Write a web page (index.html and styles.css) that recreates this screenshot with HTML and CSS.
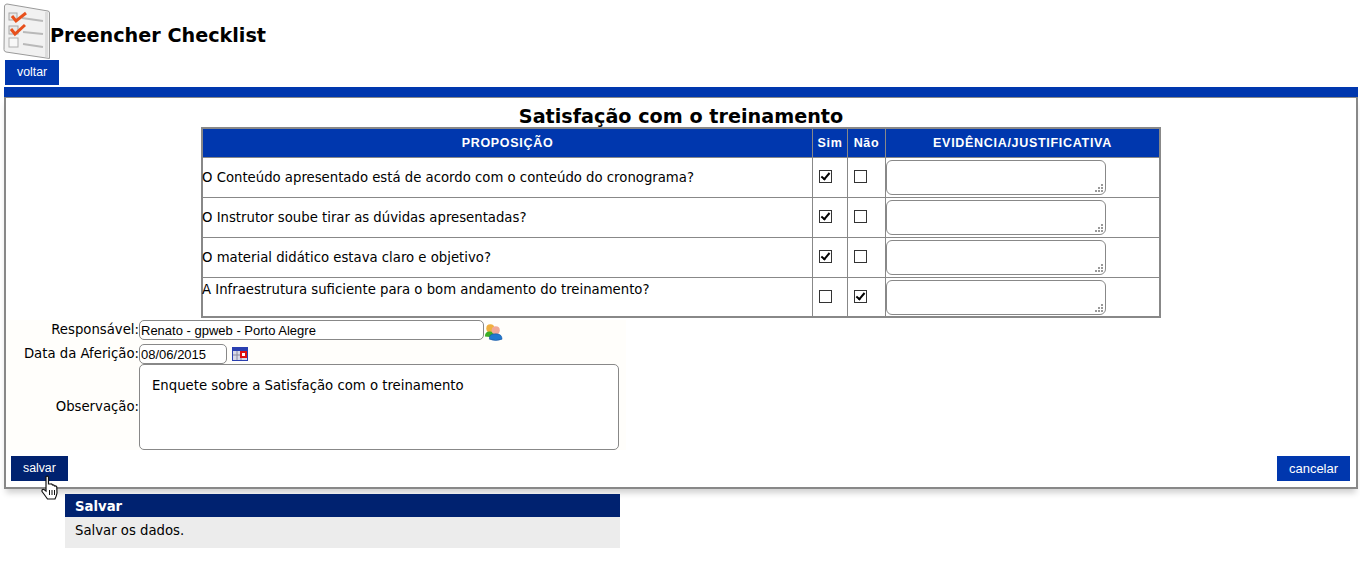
FILE: index.html
```html
<!DOCTYPE html>
<html lang="pt-BR">
<head>
    <meta charset="UTF-8">
    <title>Preencher Checklist</title>
    <link rel="stylesheet" href="styles.css">
</head>
<body>
    <div class="page-title">
        <svg class="title-icon" width="48" height="56" viewBox="0 0 48 56">
            <path d="M4 1 L45 8 Q46.500 8.300 46.500 10 L46.500 55.500 L3 49 Q1 48.500 1 46.500 L1.500 3 Q2 1 4 1 Z" fill="#f1f1f1" stroke="#9a9a9a"/>
            <path d="M45 9 L45 54.500 L42 54 L42 9 Z" fill="#dcdcdc"/>
            <rect x="6" y="10" width="8" height="7" fill="#e8e8e8" stroke="#a8a8a8"/>
            <rect x="6" y="23" width="9" height="8" fill="#e8e8e8" stroke="#a8a8a8"/>
            <rect x="6" y="35" width="9" height="9" fill="#f8f8f8" stroke="#b0b0b0"/>
            <path d="M19 15 L40 18 M20 29 L40 31 M20 41 L40 44" stroke="#b9b9b9" stroke-width="2" fill="none"/>
            <path d="M9 13 L13 18 L23 10" stroke="#e8501c" stroke-width="3" fill="none"/>
            <path d="M8 26 L12 31 L22 22" stroke="#e8501c" stroke-width="3" fill="none"/>
        </svg>
        <h1>Preencher Checklist</h1>
    </div>
    <div class="top-nav"><a class="btn">voltar</a></div>

    <div class="blue-bar"></div>
    <div class="box">
        <h2>Satisfação com o treinamento</h2>
        <table class="checklist">
            <thead>
                <tr>
                    <th class="col-text">PROPOSIÇÃO</th>
                    <th class="col-sim">Sim</th>
                    <th class="col-nao">Não</th>
                    <th>EVIDÊNCIA/JUSTIFICATIVA</th>
                </tr>
            </thead>
            <tbody>
                <tr>
                    <td>O Conteúdo apresentado está de acordo com o conteúdo do cronograma?</td>
                    <td class="mark"><input type="checkbox" checked></td>
                    <td class="mark"><input type="checkbox"></td>
                    <td class="evid"><textarea></textarea></td>
                </tr>
                <tr>
                    <td>O Instrutor soube tirar as dúvidas apresentadas?</td>
                    <td class="mark"><input type="checkbox" checked></td>
                    <td class="mark"><input type="checkbox"></td>
                    <td class="evid"><textarea></textarea></td>
                </tr>
                <tr>
                    <td>O material didático estava claro e objetivo?</td>
                    <td class="mark"><input type="checkbox" checked></td>
                    <td class="mark"><input type="checkbox"></td>
                    <td class="evid"><textarea></textarea></td>
                </tr>
                <tr class="last">
                    <td class="top">A Infraestrutura suficiente para o bom andamento do treinamento?</td>
                    <td class="mark"><input type="checkbox"></td>
                    <td class="mark"><input type="checkbox" checked></td>
                    <td class="evid"><textarea></textarea></td>
                </tr>
            </tbody>
        </table>

        <div class="form">
            <label>Responsável:</label>
            <div class="field">
                <input class="text wide" type="text" value="Renato - gpweb - Porto Alegre">
                <svg class="people" width="19" height="18" viewBox="0 0 21 20">
                    <circle cx="7" cy="6" r="4.500" fill="#f0b040"/>
                    <path d="M1 15 Q1 9 7 9.500 Q12 10 12 16 Z" fill="#3cae28"/>
                    <circle cx="13" cy="8" r="4.500" fill="#f0a898"/>
                    <path d="M6 18 Q5 12 13 12 Q20 12 20 18 Q13 21 6 18 Z" fill="#1f78d0" stroke="#14509a" stroke-width="0.600"/>
                </svg>
            </div>
            <label>Data da Aferição:</label>
            <div class="field">
                <input class="text date" type="text" value="08/06/2015">
                <svg class="cal" width="16" height="14" viewBox="0 0 16 14">
                    <rect x="0.500" y="0.500" width="15" height="13" fill="#d8d8e8" stroke="#2a3fb0"/>
                    <rect x="1" y="1" width="14" height="3" fill="#2a3fb0"/>
                    <path d="M5 4 V13 M9 4 V13 M1 8 H15" stroke="#8a8aa0"/>
                    <rect x="9" y="5" width="5" height="5" fill="#fff" stroke="#e01010" stroke-width="2"/>
                </svg>
            </div>
            <label class="obs-label">Observação:</label>
            <div class="field">
                <textarea class="obs">Enquete sobre a Satisfação com o treinamento</textarea>
            </div>
        </div>

        <div class="actions">
            <a class="btn btn-hover">salvar</a>
            <a class="btn btn-wide">cancelar</a>
        </div>
    </div>

    <svg class="cursor" width="18" height="25" viewBox="0 0 18 25">
        <path d="M5 1.500 Q6.500 0.500 7.500 2 L7.500 9 L9.500 9 Q11 8.500 11.500 10 Q13 9.500 13.500 11 Q15 10.500 15.800 12 L16 18 Q15.500 21 14 24 L6.500 24 Q3 19 1 16.500 Q0.500 14 3 14.500 L5 16 Z" fill="#fff" stroke="#111" stroke-width="1.200"/>
        <path d="M8.500 15 V20 M11 15 V20 M13.500 15 V20" stroke="#111" fill="none"/>
    </svg>

    <div class="tip">
        <div class="tip-head">Salvar</div>
        <div class="tip-body">Salvar os dados.</div>
    </div>
</body>
</html>
```

FILE: styles.css
```css
body {
    margin: 0;
    height: 568px;
    background-color: #fff;
    color: #000;
    font-family: "DejaVu Sans", Verdana, sans-serif;
    font-size: 13.25px;
    position: relative;
}

.page-title {
    display: flex;
    align-items: center;
    height: 60px;
    padding-left: 3px;
    padding-top: 2px;
    box-sizing: border-box;
}

.title-icon {
    flex: none;
}

h1 {
    margin: 10px 0 0 -1px;
    font-size: 19.2px;
    font-weight: bold;
    line-height: 24px;
}

.top-nav {
    padding-left: 5px;
    height: 27px;
}

.btn {
    display: inline-block;
    height: 25px;
    line-height: 25px;
    padding: 0 12px;
    background-color: #0037ae;
    color: #fff;
    font-family: "Liberation Sans", Arial, sans-serif;
    font-size: 12.3px;
    text-align: center;
}

.btn-hover {
    background-color: #002270;
}

.btn-wide {
    width: 73px;
    padding: 0;
    font-size: 13px;
}

.blue-bar {
    height: 10px;
    margin: 0 2px 0 4px;
    background-color: #0037ae;
}

.box {
    height: 392px;
    box-sizing: border-box;
    margin: 0 2px 0 4px;
    border: 2px solid #888;
    border-top-width: 1px;
    background-color: #fff;
    box-shadow: 0 6px 6px -2px rgba(0, 0, 0, 0.18);
}

h2 {
    margin: 0;
    height: 29px;
    padding-top: 7px;
    box-sizing: border-box;
    font-size: 19.2px;
    line-height: 23px;
    text-align: center;
}

.checklist {
    width: 960px;
    margin-left: 195px;
    border-collapse: collapse;
    table-layout: fixed;
    border: 2px solid #888;
}

.checklist th {
    height: 28px;
    padding: 0;
    background-color: #0037ae;
    color: #fff;
    font-family: "Liberation Sans", Arial, sans-serif;
    font-size: 12.5px;
    letter-spacing: 0.7px;
    border: 1px solid #888;
    border-top: 0;
}

.checklist td {
    height: 39px;
    padding: 0;
    border: 1px solid #888;
    text-indent: -1px;
}

.checklist .last td {
    height: 38px;
}

.checklist .last td.top {
    height: 34px;
    vertical-align: top;
    padding-top: 4px;
}

.col-sim {
    width: 34px;
}

.col-nao {
    width: 37px;
}

.col-text {
    width: 609px;
}

.checklist td.mark {
    padding: 0 0 2px 6px;
}

.mark input {
    display: block;
    appearance: none;
    margin: 0;
    width: 13px;
    height: 13px;
    border: 1px solid #333;
    background-color: #fff;
}

.mark input:checked::after {
    content: "";
    display: block;
    width: 3px;
    height: 7px;
    margin: 0 0 0 3px;
    border-right: 2px solid #000;
    border-bottom: 2px solid #000;
    transform: rotate(40deg);
}

.checklist .mark {
    box-sizing: border-box;
}

.evid textarea {
    display: block;
    width: 220px;
    height: 35px;
    box-sizing: border-box;
    margin: 0;
    border: 1px solid #888;
    border-radius: 6px;
    resize: none;
    background-color: #fff;
    /* dots of the resize grip */
    background-image: linear-gradient(#999, #999), linear-gradient(#999, #999), linear-gradient(#999, #999),
        linear-gradient(#999, #999), linear-gradient(#999, #999), linear-gradient(#999, #999);
    background-size: 2px 2px;
    background-repeat: no-repeat;
    background-position: right 2px bottom 2px, right 5px bottom 2px, right 8px bottom 2px,
        right 2px bottom 5px, right 5px bottom 5px, right 2px bottom 8px;
}

.form {
    display: grid;
    grid-template-columns: 133px 1fr;
    grid-template-rows: 24px 20px auto;
    width: 620px;
    margin-top: 2px;
    background-color: #fffefb;
}

.form label {
    text-align: right;
    line-height: 20px;
}

.form .obs-label {
    align-self: center;
}

.field {
    display: flex;
    align-items: flex-start;
}

.text {
    height: 20px;
    box-sizing: border-box;
    padding: 0 1px;
    border: 1px solid #888;
    border-radius: 5px;
    font-family: "Liberation Sans", Arial, sans-serif;
    font-size: 13px;
    background-color: #fff;
    color: #000;
}

.wide {
    width: 345px;
}

.date {
    width: 88px;
}

.people {
    margin-top: 3px;
}

.cal {
    margin: 3px 0 0 5px;
}

.obs {
    width: 480px;
    height: 86px;
    box-sizing: border-box;
    margin: 0;
    padding: 13px 12px;
    border: 1px solid #888;
    border-radius: 5px;
    font-family: "DejaVu Sans", Verdana, sans-serif;
    font-size: 13.25px;
    background-color: #fff;
    resize: none;
}

.actions {
    display: flex;
    justify-content: space-between;
    padding: 6px 6px 0 5px;
}

/* over the page: hand pointer and hint of the hovered button */
.cursor {
    position: absolute;
    left: 41px;
    top: 475px;
}

.tip {
    position: absolute;
    left: 65px;
    top: 494px;
    width: 555px;
}

.tip-head {
    height: 23px;
    line-height: 26px;
    padding-left: 10px;
    background-color: #002270;
    color: #fff;
    font-weight: bold;
}

.tip-body {
    height: 31px;
    line-height: 27px;
    padding-left: 10px;
    background-color: #ececec;
}
```
